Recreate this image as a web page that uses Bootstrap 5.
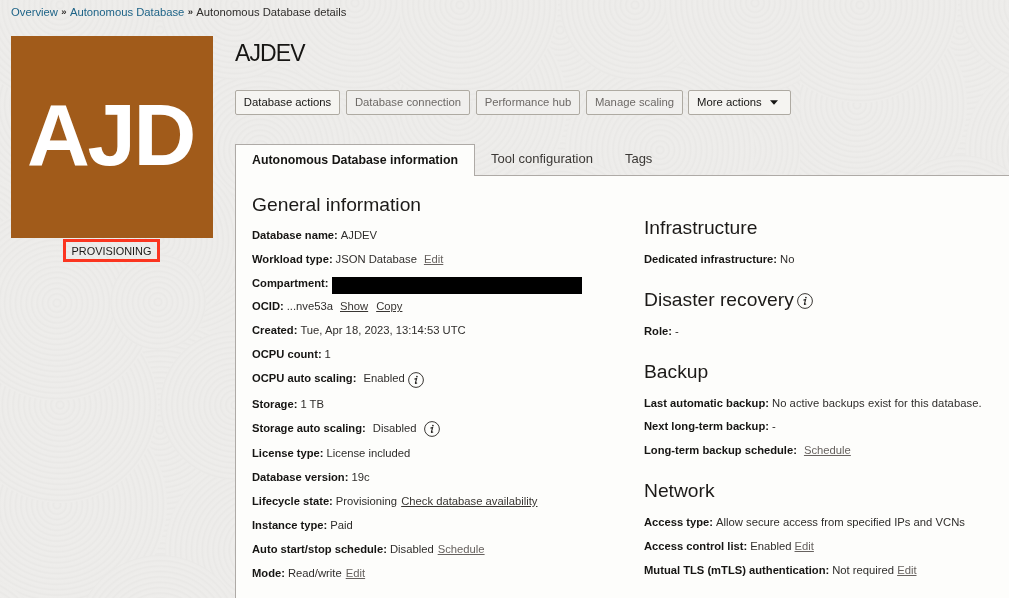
<!DOCTYPE html>
<html lang="en">
<head>
<meta charset="utf-8">
<meta name="viewport" content="width=device-width, initial-scale=1">
<title>Autonomous Database details</title>
<link href="https://cdn.jsdelivr.net/npm/bootstrap@5.3.0/dist/css/bootstrap.min.css" rel="stylesheet">
<style>
  body { font-family: "Liberation Sans", Arial, sans-serif; font-size: 11.25px; line-height: 24px; color: #2f2d2b; background: #edecea; height: 598px; overflow: hidden; }
  .swirls { position: fixed; inset: 0; width: 100%; height: 100%; z-index: -1; }
  .crumbs { height: 36px; padding-left: 11px; white-space: pre; }
  .crumbs a { color: #1d6387; text-decoration: none; }
  .crumbs .sep { width: 12px; text-align: center; font-weight: bold; font-size: 9.5px; }
  .side { width: 202px; margin-left: 11px; }
  .tile { height: 202px; background: #a15b1a; color: #fff; font-weight: bold; font-size: 87px; letter-spacing: -2.3px; line-height: 198px; text-indent: -3px; }
  .status { width: 97px; height: 23px; margin: 1px 0 0 52px; border: 3px solid #fb3520; line-height: 18px; font-size: 10.9px; color: #1c1a18; }
  .main-col { margin-left: 22px; min-width: 0; }
  h1 { font-size: 23px; line-height: 32px; letter-spacing: -.9px; color: #161513; margin: 0; padding-top: 1px; }
  h1, h2 { font-weight: 400; }
  .actions { margin-top: 21px; gap: 6px; }
  .actions .btn { --bs-btn-font-size: 11.3px; --bs-btn-line-height: 23px; --bs-btn-padding-x: 0; --bs-btn-padding-y: 0; --bs-btn-border-radius: 2px; --bs-btn-color: #161513; --bs-btn-bg: #f5f4f1; --bs-btn-border-color: #aeaaa2; --bs-btn-disabled-color: #6d6966; --bs-btn-disabled-bg: #f0efed; --bs-btn-disabled-border-color: #aeaaa2; --bs-btn-disabled-opacity: 1; height: 25px; white-space: nowrap; }
  .tabs { margin-top: 29px; height: 32px; border-bottom: 1px solid #aeaaa6; font-size: 13px; --bs-nav-tabs-border-width: 0; }
  .tabs .nav-link { padding: 0 16px; line-height: 29px; color: #3b3835; border: 0; }
  .tabs .nav-link.active { border: 1px solid #aeaaa6; border-bottom: 0; border-radius: 0; height: 32px; margin-bottom: -1px; background: #fdfdfb; color: #161513; font-weight: bold; font-size: 12.36px; line-height: 31px; width: 240px; }
  .panel { background: #fdfdfb; border-left: 1px solid #aeaaa6; height: 423px; padding-left: 16px; }
  .col-left { width: 392px; padding-top: 10px; }
  .col-right { padding-top: 23px; }
  h2 { font-size: 19.25px; line-height: 37px; margin: 0; color: #1c1a18; }
  .col-right h2 { padding-top: 10px; line-height: 38px; }
  .item { display: flex; height: 24px; white-space: nowrap; }
  .item b { font-size: 11.2px; color: #161513; margin-right: 3px; }
  .item a { color: #67625f; text-decoration: underline; text-underline-offset: 1px; margin-left: 4px; }
  .item a.strong-link { color: #393633; }
  .item.tight { height: 23px; }
  .item.loose { height: 25px; }
  .item.looser { height: 26px; }
  .redacted { width: 250px; height: 17px; background: #000; margin: 6px 0 0 1px; }
  .info { width: 16px; height: 16px; flex: none; }
</style>
</head>
<body>
<svg class="swirls" aria-hidden="true">
  <defs>
    <radialGradient id="rings" gradientUnits="userSpaceOnUse" cx="0" cy="0" r="5.4" spreadMethod="repeat">
      <stop offset="0" stop-color="#eeedeb"/><stop offset=".4" stop-color="#edecea"/><stop offset=".7" stop-color="#e9e8e6"/><stop offset="1" stop-color="#eeedeb"/>
    </radialGradient>
    <pattern id="waves" width="400" height="400" patternUnits="userSpaceOnUse">
      <g fill="url(#rings)">
        <circle r="150" transform="translate(160 190)"/>
        <circle r="150" transform="translate(330 150)"/>
        <circle r="130" transform="translate(20 230)"/>
        <circle r="110" transform="translate(160 30)"/>
        <circle r="110" transform="translate(160 430)"/>
        <circle r="110" transform="translate(57 105)"/>
        <circle r="95" transform="translate(260 150)"/>
        <circle r="85" transform="translate(160 240)"/>
        <circle r="100" transform="translate(355 270)"/>
        <circle r="100" transform="translate(-45 270)"/>
        <circle r="98" transform="translate(60 5)"/>
        <circle r="98" transform="translate(60 405)"/>
        <circle r="75" transform="translate(235 5)"/>
        <circle r="75" transform="translate(235 405)"/>
        <circle r="90" transform="translate(355 3)"/>
        <circle r="90" transform="translate(355 403)"/>
        <circle r="98" transform="translate(57 303)"/>
        <circle r="48" transform="translate(158 302)"/>
      </g>
    </pattern>
  </defs>
  <rect width="100%" height="100%" fill="url(#waves)"/>
</svg>
<svg class="d-none">
  <symbol id="i-info" viewBox="0 0 16 16">
    <circle cx="8" cy="8" r="7.4" fill="none" stroke="#393633" stroke-width="1"/>
    <path d="M6.5 7.1 8.6 6.6 7.4 11.1Q7.3 11.9 9.1 10.8" fill="none" stroke="#262422" stroke-width="1.1"/>
    <circle cx="8.9" cy="4.5" r=".85" fill="#262422"/>
  </symbol>
</svg>

<nav class="crumbs d-flex" aria-label="breadcrumb"><a href="#">Overview</a><span class="sep">»</span><a href="#">Autonomous Database</a><span class="sep">»</span><span>Autonomous Database details</span></nav>

<div class="d-flex">
  <aside class="side flex-shrink-0">
    <div class="tile text-center">AJD</div>
    <div class="status text-center">PROVISIONING</div>
  </aside>
  <main class="main-col flex-grow-1">
    <h1>AJDEV</h1>
    <div class="actions d-flex">
      <button class="btn" style="width:105px">Database actions</button>
      <button class="btn" style="width:124px" disabled>Database connection</button>
      <button class="btn" style="width:104px" disabled>Performance hub</button>
      <button class="btn" style="width:97px" disabled>Manage scaling</button>
      <button class="btn d-flex align-items-center" style="width:103px;margin-left:-1px;padding-left:8px">More actions<svg class="ms-2" width="8" height="5" viewBox="0 0 8 5"><path d="M0 .3h8L4 4.8z" fill="#161513"/></svg></button>
    </div>
    <ul class="nav nav-tabs tabs flex-nowrap">
      <li class="nav-item"><a class="nav-link active" href="#">Autonomous Database information</a></li>
      <li class="nav-item"><a class="nav-link" href="#">Tool configuration</a></li>
      <li class="nav-item"><a class="nav-link" href="#">Tags</a></li>
    </ul>
    <div class="panel d-flex">
      <section class="col-left flex-shrink-0">
        <h2>General information</h2>
        <div class="item"><b>Database name:</b>AJDEV</div>
        <div class="item"><b>Workload type:</b>JSON Database<a style="margin-left:7px" href="#">Edit</a></div>
        <div class="item tight"><b>Compartment:</b><span class="redacted"></span></div>
        <div class="item"><b>OCID:</b>...nve53a<a class="strong-link" style="margin-left:7px" href="#">Show</a><a class="strong-link ms-2" href="#">Copy</a></div>
        <div class="item"><b>Created:</b>Tue, Apr 18, 2023, 13:14:53 UTC</div>
        <div class="item"><b>OCPU count:</b>1</div>
        <div class="item looser"><b>OCPU auto scaling:</b><span class="ms-1" style="margin-right:3px">Enabled</span><svg class="info" style="margin-top:6px"><use href="#i-info"/></svg></div>
        <div class="item"><b>Storage:</b>1 TB</div>
        <div class="item loose"><b>Storage auto scaling:</b><span class="ms-1" style="margin-right:7px">Disabled</span><svg class="info" style="margin-top:5px"><use href="#i-info"/></svg></div>
        <div class="item"><b>License type:</b>License included</div>
        <div class="item"><b>Database version:</b>19c</div>
        <div class="item"><b>Lifecycle state:</b>Provisioning<a class="strong-link" href="#">Check database availability</a></div>
        <div class="item"><b>Instance type:</b>Paid</div>
        <div class="item"><b>Auto start/stop schedule:</b>Disabled<a href="#">Schedule</a></div>
        <div class="item"><b>Mode:</b>Read/write<a href="#">Edit</a></div>
      </section>
      <section class="col-right">
        <h2>Infrastructure</h2>
        <div class="item"><b>Dedicated infrastructure:</b>No</div>
        <h2 class="d-flex">Disaster recovery<svg class="info" style="margin:12px 0 0 3px"><use href="#i-info"/></svg></h2>
        <div class="item"><b>Role:</b>-</div>
        <h2>Backup</h2>
        <div class="item tight"><b>Last automatic backup:</b><span style="letter-spacing:.05px">No active backups exist for this database.</span></div>
        <div class="item"><b>Next long-term backup:</b>-</div>
        <div class="item"><b>Long-term backup schedule:</b><a href="#">Schedule</a></div>
        <h2>Network</h2>
        <div class="item"><b>Access type:</b>Allow secure access from specified IPs and VCNs</div>
        <div class="item"><b>Access control list:</b>Enabled<a style="margin-left:3px" href="#">Edit</a></div>
        <div class="item"><b>Mutual TLS (mTLS) authentication:</b>Not required<a style="margin-left:3px" href="#">Edit</a></div>
      </section>
    </div>
  </main>
</div>
<script src="https://cdn.jsdelivr.net/npm/bootstrap@5.3.0/dist/js/bootstrap.bundle.min.js"></script>
</body>
</html>
